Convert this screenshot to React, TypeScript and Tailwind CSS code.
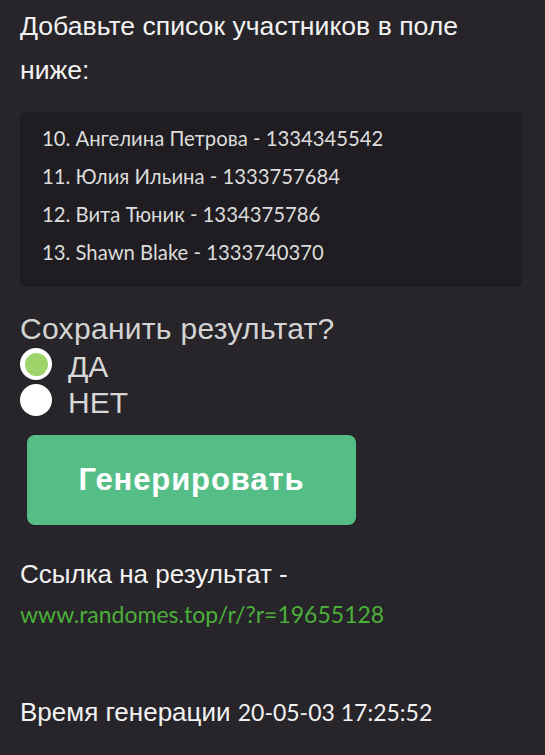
import React from "react";

const sans = { fontFamily: '"Liberation Sans", Arial, sans-serif' };
const alt = { fontFamily: 'Lato, "Noto Sans", sans-serif' };

export default function App() {
  const items = [
    "10. Ангелина Петрова - 1334345542",
    "11. Юлия Ильина - 1333757684",
    "12. Вита Тюник - 1334375786",
    "13. Shawn Blake - 1333740370",
  ];
  return (
    <div className="w-[545px] h-[755px] bg-[#27252a] overflow-hidden px-5 pt-[4px]" style={sans}>
      <p className="text-[26.6px] leading-[44px] text-[#f2f2f2]">
        Добавьте список участников в поле
        <br />
        ниже:
      </p>
      <div className="mt-[20px] w-[502px] h-[175px] rounded-[6px] bg-[#1f1d21] pl-[22px] pt-[12px]" style={alt}>
        {items.map((t) => (
          <div key={t} className="h-[38px] leading-[28px] text-[20.3px] text-[#dcdcdc]">
            {t}
          </div>
        ))}
      </div>
      <div className="mt-[25px] text-[30px] tracking-[0.3px] leading-[34px] text-[#d4d4d4]">Сохранить результат?</div>
      <div className="flex items-center gap-[16px] h-[36px]">
        <div className="w-[32px] h-[32px] rounded-full bg-white flex items-center justify-center">
          <div className="w-[23px] h-[23px] rounded-full bg-[#9ed46a]" />
        </div>
        <span className="text-[30px] text-[#d8d8d8] leading-[32px] mt-[5px]">ДА</span>
      </div>
      <div className="flex items-center gap-[16px] h-[36px]">
        <div className="w-[32px] h-[32px] rounded-full bg-white" />
        <span className="text-[30px] text-[#d8d8d8] leading-[32px] mt-[5px]">НЕТ</span>
      </div>
      <button className="mt-[17px] ml-[7px] w-[329px] h-[90px] rounded-[8px] bg-[#55be87] text-white font-bold text-[31px] tracking-[0.9px] flex items-center justify-center">
        Генерировать
      </button>
      <div className="mt-[30px] text-[26px] leading-[38px] text-[#f2f2f2]">Ссылка на результат -</div>
      <div className="mt-[1px] text-[23px] leading-[40px] text-[#4caf3a]" style={alt}>
        www.randomes.top/r/?r=19655128
      </div>
      <div className="mt-[59px] text-[26px] leading-[38px] text-[#f2f2f2]">
        Время генерации <span className="text-[23px]" style={alt}>20-05-03 17:25:52</span>
      </div>
    </div>
  );
}
